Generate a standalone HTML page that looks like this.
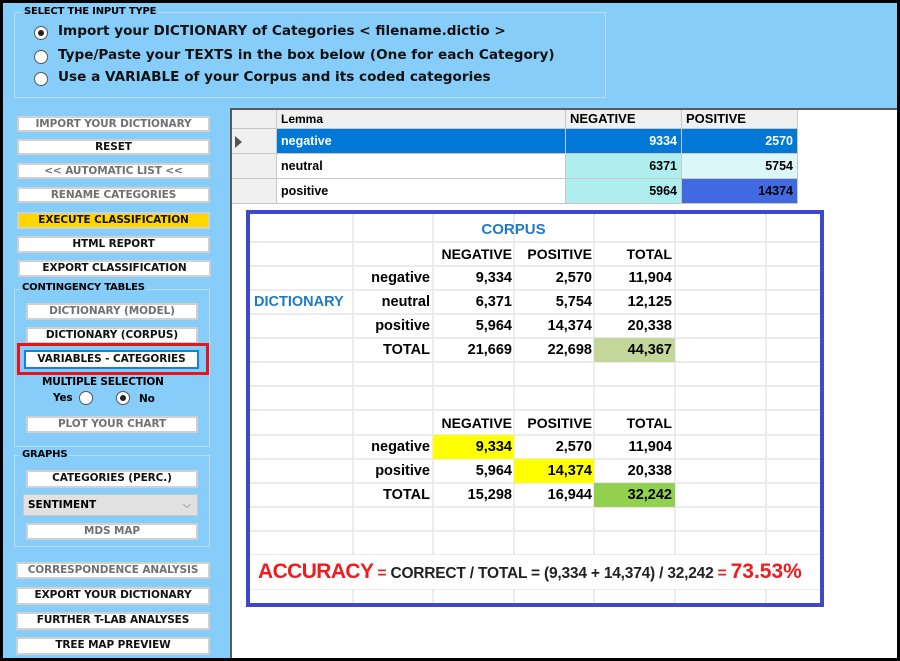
<!DOCTYPE html>
<html><head><meta charset="utf-8"><style>
*{margin:0;padding:0;box-sizing:border-box}
body{width:900px;height:661px;background:#000;position:relative;overflow:hidden;font-family:"DejaVu Sans",sans-serif}
.a{position:absolute}
#bg{left:3px;top:3px;width:894px;height:655px;background:#87cdf9}
.grp{position:absolute;border:1px solid #b9dcf2}
.lbl{position:absolute;font-weight:bold;font-size:10px;color:#000;background:#87cdf9;padding:0 2px;white-space:nowrap;letter-spacing:-0.2px}
.btn{position:absolute;background:#fff;border:2px solid #d0d0d0;font-weight:bold;font-size:10.5px;text-align:center;white-space:nowrap;color:#111;line-height:12px;letter-spacing:-0.1px}
.dis{color:#707070}
.rad{position:absolute;width:14px;height:14px;border-radius:50%;background:#fff;border:1px solid #555}
.rad.on::after{content:"";position:absolute;left:3px;top:3px;width:6px;height:6px;border-radius:50%;background:#222}
.opt{position:absolute;font-weight:bold;font-size:13.6px;white-space:nowrap;color:#111}
#white{left:230px;top:108px;width:667px;height:550px;background:#fff;border-left:2px solid #5a5a5a;border-top:2px solid #5a5a5a}
.gc{position:absolute;font-family:"Liberation Sans",Arial,sans-serif;font-weight:bold;font-size:12.5px;line-height:24px;padding:0 4px;white-space:nowrap;border-right:1px solid #c8c8c8;border-bottom:1px solid #c8c8c8;overflow:hidden}
.x{position:absolute;font-family:"Liberation Sans",sans-serif;font-weight:bold;font-size:14.5px;text-align:right;white-space:nowrap;line-height:24px;color:#000}
</style></head><body>
<div class="a" id="bg"></div>

<div class="grp" style="left:14px;top:12px;width:592px;height:86px"></div>
<div class="lbl" style="left:22px;top:6px">SELECT THE INPUT TYPE</div>
<div class="rad on" style="left:34px;top:26px"></div>
<div class="opt" style="left:58px;top:23px">Import your DICTIONARY of Categories &lt; filename.dictio &gt;</div>
<div class="rad" style="left:34px;top:50px"></div>
<div class="opt" style="left:58px;top:47px">Type/Paste your TEXTS in the box below (One for each Category)</div>
<div class="rad" style="left:34px;top:72px"></div>
<div class="opt" style="left:58px;top:69px">Use a VARIABLE of your Corpus and its coded categories</div>

<div class="btn dis" style="left:17px;top:116px;width:193px;height:16px">IMPORT YOUR DICTIONARY</div>
<div class="btn" style="left:17px;top:139px;width:193px;height:16px">RESET</div>
<div class="btn dis" style="left:17px;top:163px;width:193px;height:16px">&lt;&lt; AUTOMATIC LIST &lt;&lt;</div>
<div class="btn dis" style="left:17px;top:187px;width:193px;height:16px">RENAME CATEGORIES</div>
<div class="btn" style="left:17px;top:212px;width:193px;height:17px;background:#ffd700">EXECUTE CLASSIFICATION</div>
<div class="btn" style="left:17px;top:236px;width:193px;height:17px">HTML REPORT</div>
<div class="btn" style="left:18px;top:260px;width:193px;height:17px">EXPORT CLASSIFICATION</div>

<div class="grp" style="left:14px;top:289px;width:196px;height:158px"></div>
<div class="lbl" style="left:20px;top:282px">CONTINGENCY TABLES</div>
<div class="btn dis" style="left:26px;top:303px;width:172px;height:17px">DICTIONARY (MODEL)</div>
<div class="btn" style="left:26px;top:327px;width:172px;height:17px">DICTIONARY (CORPUS)</div>
<div class="a" style="left:17px;top:343px;width:192px;height:32px;border:3px solid #e8141c"></div>
<div class="btn" style="left:24px;top:350px;width:175px;height:19px;border:2px solid #1a7fd9;line-height:15px">VARIABLES - CATEGORIES</div>
<div class="lbl" style="left:40px;top:376px;font-size:10.5px">MULTIPLE SELECTION</div>
<div class="lbl" style="left:51px;top:392px;font-size:10.5px">Yes</div>
<div class="rad" style="left:79px;top:391px"></div>
<div class="rad on" style="left:116px;top:391px"></div>
<div class="lbl" style="left:137px;top:393px;font-size:10.5px">No</div>
<div class="btn dis" style="left:26px;top:416px;width:172px;height:17px">PLOT YOUR CHART</div>

<div class="grp" style="left:14px;top:455px;width:196px;height:92px"></div>
<div class="lbl" style="left:20px;top:449px">GRAPHS</div>
<div class="btn" style="left:26px;top:470px;width:172px;height:18px">CATEGORIES (PERC.)</div>
<div class="a" style="left:23px;top:494px;width:175px;height:22px;background:#e1e1e1;border:1px solid #c8c8c8;font-weight:bold;font-size:10.5px;line-height:20px;padding-left:4px">SENTIMENT<span style="position:absolute;right:6px;top:0;color:#777;font-weight:normal">⌵</span></div>
<div class="btn dis" style="left:26px;top:523px;width:172px;height:17px">MDS MAP</div>

<div class="btn dis" style="left:16px;top:562px;width:194px;height:17px">CORRESPONDENCE ANALYSIS</div>
<div class="btn" style="left:16px;top:587px;width:194px;height:18px">EXPORT YOUR DICTIONARY</div>
<div class="btn" style="left:16px;top:612px;width:194px;height:18px">FURTHER T-LAB ANALYSES</div>
<div class="btn" style="left:16px;top:637px;width:194px;height:18px">TREE MAP PREVIEW</div>

<div class="a" id="white"></div>
<div class="gc" style="left:232px;top:110px;width:45px;height:19px;background:#f0f0f0;line-height:18px"></div>
<div class="gc" style="left:277px;top:110px;width:289px;height:19px;background:#f0f0f0;line-height:18px;font-size:12px">Lemma</div>
<div class="gc" style="left:566px;top:110px;width:116px;height:19px;background:#f0f0f0;line-height:18px;font-size:13px">NEGATIVE</div>
<div class="gc" style="left:682px;top:110px;width:116px;height:19px;background:#f0f0f0;line-height:18px;font-size:13px">POSITIVE</div>

<div class="gc" style="left:232px;top:129px;width:45px;height:25px;background:#f0f0f0"><span style="display:inline-block;width:0;height:0;border-top:6px solid transparent;border-bottom:6px solid transparent;border-left:7px solid #555;vertical-align:middle;margin-left:-1px"></span></div>
<div class="gc" style="left:277px;top:129px;width:289px;height:25px;background:#0078d7;color:#fff">negative</div>
<div class="gc" style="left:566px;top:129px;width:116px;height:25px;background:#0078d7;color:#fff;text-align:right">9334</div>
<div class="gc" style="left:682px;top:129px;width:116px;height:25px;background:#0078d7;color:#fff;text-align:right">2570</div>

<div class="gc" style="left:232px;top:154px;width:45px;height:25px;background:#f0f0f0"></div>
<div class="gc" style="left:277px;top:154px;width:289px;height:25px;background:#fff">neutral</div>
<div class="gc" style="left:566px;top:154px;width:116px;height:25px;background:#afeeee;text-align:right">6371</div>
<div class="gc" style="left:682px;top:154px;width:116px;height:25px;background:#dbf7f7;text-align:right">5754</div>

<div class="gc" style="left:232px;top:179px;width:45px;height:25px;background:#f0f0f0"></div>
<div class="gc" style="left:277px;top:179px;width:289px;height:25px;background:#fff">positive</div>
<div class="gc" style="left:566px;top:179px;width:116px;height:25px;background:#afeeee;text-align:right">5964</div>
<div class="gc" style="left:682px;top:179px;width:116px;height:25px;background:#4169e1;text-align:right">14374</div>

<div class="a" style="left:246px;top:210px;width:578px;height:397px;border:4px solid #3f48cc;background:#fff"></div>
<svg class="a" style="left:250px;top:214px" width="570" height="389">
<g stroke="#e6e6e6" stroke-width="1.5">
<line x1="103" y1="0" x2="103" y2="389"/><line x1="183" y1="0" x2="183" y2="389"/><line x1="264" y1="0" x2="264" y2="389"/><line x1="344" y1="0" x2="344" y2="389"/><line x1="425" y1="0" x2="425" y2="389"/><line x1="516" y1="0" x2="516" y2="389"/>
<line x1="0" y1="28" x2="570" y2="28"/><line x1="0" y1="52" x2="570" y2="52"/><line x1="0" y1="76" x2="570" y2="76"/><line x1="0" y1="100" x2="570" y2="100"/><line x1="0" y1="124" x2="570" y2="124"/><line x1="0" y1="148" x2="570" y2="148"/><line x1="0" y1="172" x2="570" y2="172"/><line x1="0" y1="196" x2="570" y2="196"/><line x1="0" y1="221" x2="570" y2="221"/><line x1="0" y1="245" x2="570" y2="245"/><line x1="0" y1="269" x2="570" y2="269"/><line x1="0" y1="293" x2="570" y2="293"/><line x1="0" y1="317" x2="570" y2="317"/><line x1="0" y1="341" x2="570" y2="341"/><line x1="0" y1="375" x2="570" y2="375"/>
</g>
<rect x="344" y="124" width="81" height="24" fill="#c4d79b"/>
<rect x="183" y="221" width="81" height="24" fill="#ffff00"/>
<rect x="264" y="245" width="80" height="24" fill="#ffff00"/>
<rect x="344" y="269" width="81" height="24" fill="#92d050"/>
<rect x="0" y="341" width="570" height="34" fill="#fff"/>
</svg>
<div class="x" style="left:433px;top:218px;width:161px;text-align:center;color:#1f7ac4;font-size:15px">CORPUS</div>
<div class="x" style="left:433px;top:242px;width:79px;font-size:14px">NEGATIVE</div>
<div class="x" style="left:514px;top:242px;width:78px;font-size:14px">POSITIVE</div>
<div class="x" style="left:594px;top:242px;width:78px;font-size:14px">TOTAL</div>
<div class="x" style="left:353px;top:266px;width:77px">negative</div>
<div class="x" style="left:433px;top:266px;width:79px">9,334</div>
<div class="x" style="left:514px;top:266px;width:78px">2,570</div>
<div class="x" style="left:594px;top:266px;width:78px">11,904</div>
<div class="x" style="left:254px;top:290px;width:98px;text-align:left;color:#1f7ac4;font-size:14.5px">DICTIONARY</div>
<div class="x" style="left:353px;top:290px;width:77px">neutral</div>
<div class="x" style="left:433px;top:290px;width:79px">6,371</div>
<div class="x" style="left:514px;top:290px;width:78px">5,754</div>
<div class="x" style="left:594px;top:290px;width:78px">12,125</div>
<div class="x" style="left:353px;top:314px;width:77px">positive</div>
<div class="x" style="left:433px;top:314px;width:79px">5,964</div>
<div class="x" style="left:514px;top:314px;width:78px">14,374</div>
<div class="x" style="left:594px;top:314px;width:78px">20,338</div>
<div class="x" style="left:353px;top:338px;width:77px">TOTAL</div>
<div class="x" style="left:433px;top:338px;width:79px">21,669</div>
<div class="x" style="left:514px;top:338px;width:78px">22,698</div>
<div class="x" style="left:594px;top:338px;width:78px">44,367</div>

<div class="x" style="left:433px;top:411px;width:79px;font-size:14px">NEGATIVE</div>
<div class="x" style="left:514px;top:411px;width:78px;font-size:14px">POSITIVE</div>
<div class="x" style="left:594px;top:411px;width:78px;font-size:14px">TOTAL</div>
<div class="x" style="left:353px;top:435px;width:77px">negative</div>
<div class="x" style="left:433px;top:435px;width:79px">9,334</div>
<div class="x" style="left:514px;top:435px;width:78px">2,570</div>
<div class="x" style="left:594px;top:435px;width:78px">11,904</div>
<div class="x" style="left:353px;top:459px;width:77px">positive</div>
<div class="x" style="left:433px;top:459px;width:79px">5,964</div>
<div class="x" style="left:514px;top:459px;width:78px">14,374</div>
<div class="x" style="left:594px;top:459px;width:78px">20,338</div>
<div class="x" style="left:353px;top:483px;width:77px">TOTAL</div>
<div class="x" style="left:433px;top:483px;width:79px">15,298</div>
<div class="x" style="left:514px;top:483px;width:78px">16,944</div>
<div class="x" style="left:594px;top:483px;width:78px">32,242</div>

<div class="a" style="left:258px;top:557px;white-space:nowrap;font-family:'Liberation Sans',sans-serif;line-height:30px;color:#222"><span style="color:#ee1c1c;font-size:21px;font-weight:bold;letter-spacing:-0.6px">ACCURACY</span><span style="font-size:15.5px;font-weight:bold;letter-spacing:-0.2px"> <span style="color:#ee1c1c">=</span> CORRECT / TOTAL = (9,334 + 14,374) / 32,242 <span style="color:#ee1c1c">=</span> </span><span style="color:#ee1c1c;font-size:21px;font-weight:bold">73.53%</span></div>
</body></html>
